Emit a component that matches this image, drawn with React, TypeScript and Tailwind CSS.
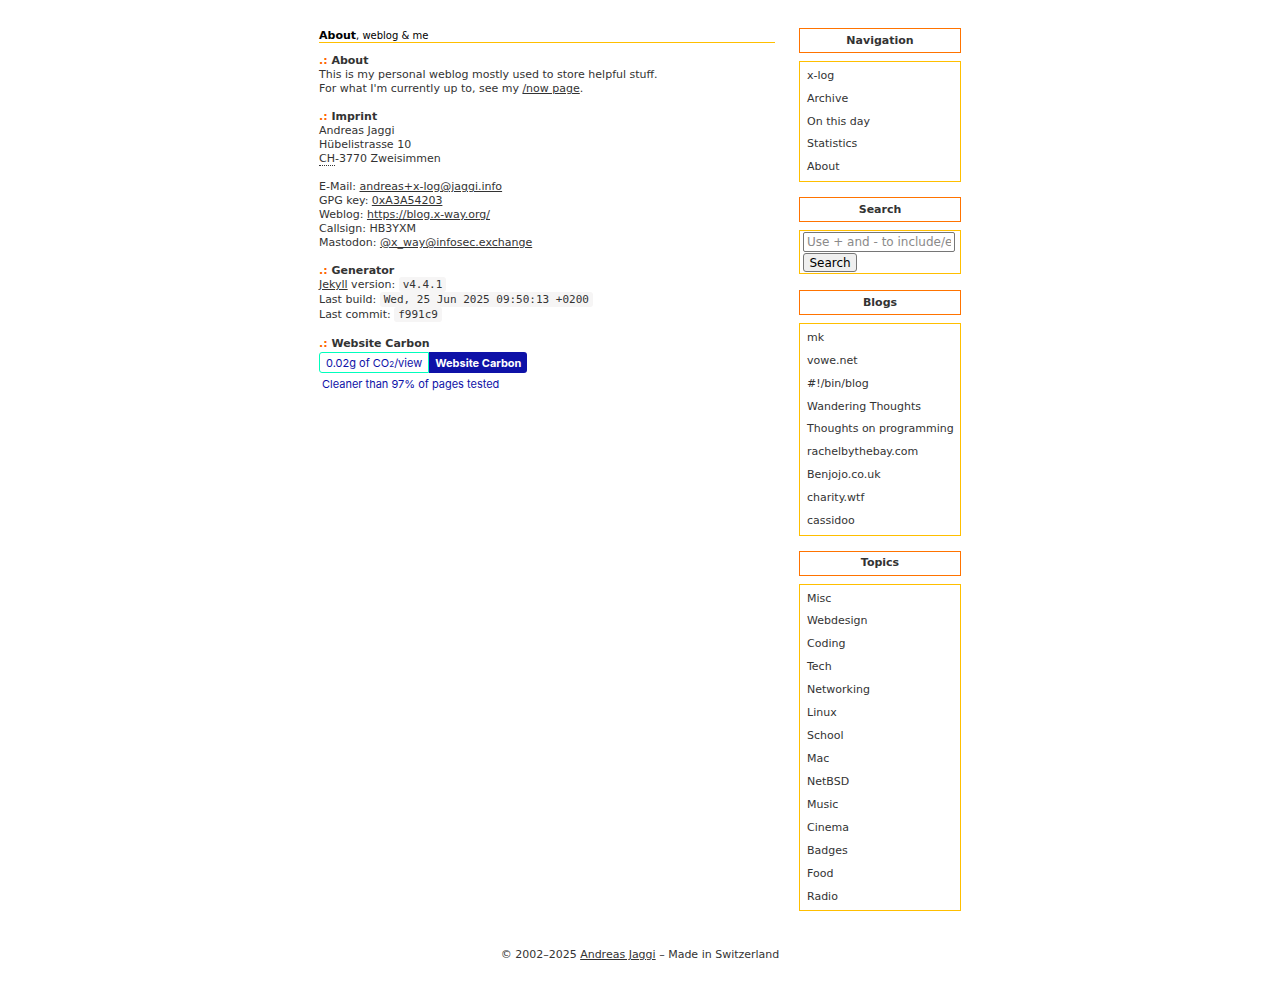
import React from "react";

const font = { fontFamily: '"DejaVu Sans", Verdana, sans-serif' };

function Heading({ children }: { children: React.ReactNode }) {
  return (
    <div className="font-bold">
      <span className="text-[#ff6600]">.:</span> {children}
    </div>
  );
}

function Code({ children }: { children: React.ReactNode }) {
  return (
    <code
      className="bg-[#f6f5f5] rounded-[3px] px-[4px] py-[1px] text-[11px] text-[#333]"
      style={{ fontFamily: '"DejaVu Sans Mono", Menlo, monospace' }}
    >
      {children}
    </code>
  );
}

function A({ children }: { children: React.ReactNode }) {
  return <a className="underline text-[#333]">{children}</a>;
}

function SideBox({ title, items }: { title: string; items: string[] }) {
  return (
    <div className="flex flex-col">
      <div className="border border-[#ff7300] h-[25px] flex items-center justify-center font-bold">
        {title}
      </div>
      <ul className="mt-[8px] border border-[#ffbf00] py-[2.2px]">
        {items.map((i) => (
          <li key={i} className="h-[22.95px] flex items-center pl-[7px] whitespace-nowrap">
            {i}
          </li>
        ))}
      </ul>
    </div>
  );
}

export default function App() {
  return (
    <div className="bg-white min-h-[994px] text-[#333] text-[11px] leading-[14px]" style={font}>
      <div className="w-[642px] mx-auto pt-[28px] flex gap-[24px]">
        <main className="w-[456px]">
          <div className="border-b border-[#ffbf00] h-[15px] pt-[1px] text-black">
            <span className="font-bold">About</span>
            <span className="text-[10px]">, weblog &amp; me</span>
          </div>
          <div className="mt-[11px]">
            <Heading>About</Heading>
            <div>This is my personal weblog mostly used to store helpful stuff.</div>
            <div>
              For what I'm currently up to, see my <A>/now page</A>.
            </div>
            <div className="h-[14px]" />
            <Heading>Imprint</Heading>
            <div>Andreas Jaggi</div>
            <div>Hübelistrasse 10</div>
            <div>
              <abbr className="no-underline border-b border-dotted border-[#333]">CH</abbr>-3770 Zweisimmen
            </div>
            <div className="h-[14px]" />
            <div>
              E-Mail: <A>andreas+x-log@jaggi.info</A>
            </div>
            <div>
              GPG key: <A>0xA3A54203</A>
            </div>
            <div>
              Weblog: <A>https://blog.x-way.org/</A>
            </div>
            <div>Callsign: HB3YXM</div>
            <div>
              Mastodon: <A>@x_way@infosec.exchange</A>
            </div>
            <div className="h-[14px]" />
            <Heading>Generator</Heading>
            <div className="mb-[1px]">
              <A>Jekyll</A> version: <Code>v4.4.1</Code>
            </div>
            <div className="mb-[1px]">
              Last build: <Code>Wed, 25 Jun 2025 09:50:13 +0200</Code>
            </div>
            <div className="mb-[1px]">
              Last commit: <Code>f991c9</Code>
            </div>
            <div className="h-[14px]" />
            <Heading>Website Carbon</Heading>
            <div
              className="mt-[1px] flex h-[21px] text-[11px]"
              style={{ fontFamily: 'Inter, "Liberation Sans", sans-serif' }}
            >
              <div className="border border-[#00ffbc] rounded-l-[3px] text-[#0e11a7] px-[6px] flex items-center">
                0.02g of CO<sub className="text-[8px] leading-none relative top-[1px]">2</sub>/view
              </div>
              <div className="bg-[#0e11a7] text-white font-bold px-[6px] flex items-center rounded-r-[3px]">
                Website Carbon
              </div>
            </div>
            <div
              className="mt-[4px] pl-[3px] text-[#0e11a7] text-[11px]"
              style={{ fontFamily: 'Inter, "Liberation Sans", sans-serif' }}
            >
              Cleaner than 97% of pages tested
            </div>
          </div>
        </main>
        <aside className="w-[162px] flex flex-col gap-[15px]">
          <SideBox title="Navigation" items={["x-log", "Archive", "On this day", "Statistics", "About"]} />
          <div className="flex flex-col mb-[1px]">
            <div className="border border-[#ff7300] h-[25px] flex items-center justify-center font-bold">
              Search
            </div>
            <div className="mt-[8px] border border-[#ffbf00] pt-[1px] pb-[1px] pl-[3px] pr-[4px] flex flex-col items-start">
              <input
                className="w-[152px] h-[20px] border border-[#767676] rounded-[2px] px-[3px] text-[12px] placeholder:text-[#8a8a8a] outline-none"
                placeholder="Use + and - to include/exclude"
                style={font}
              />
              <button
                className="mt-[1px] h-[19px] w-[54px] bg-[#efefef] border border-[#767676] rounded-[3px] text-[12px] text-black leading-none"
                style={font}
              >
                Search
              </button>
            </div>
          </div>
          <SideBox
            title="Blogs"
            items={[
              "mk",
              "vowe.net",
              "#!/bin/blog",
              "Wandering Thoughts",
              "Thoughts on programming",
              "rachelbythebay.com",
              "Benjojo.co.uk",
              "charity.wtf",
              "cassidoo",
            ]}
          />
          <SideBox
            title="Topics"
            items={[
              "Misc",
              "Webdesign",
              "Coding",
              "Tech",
              "Networking",
              "Linux",
              "School",
              "Mac",
              "NetBSD",
              "Music",
              "Cinema",
              "Badges",
              "Food",
              "Radio",
            ]}
          />
        </aside>
      </div>
      <footer className="mt-[37px] text-center">
        © 2002–2025 <A>Andreas Jaggi</A> – Made in Switzerland
      </footer>
    </div>
  );
}
